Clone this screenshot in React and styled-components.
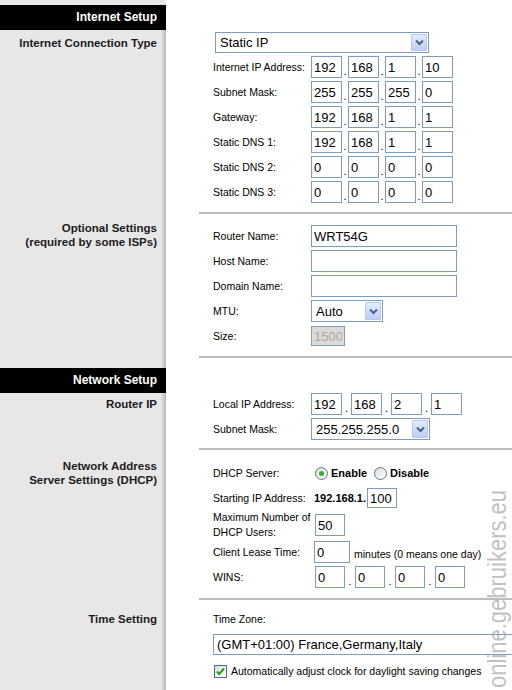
import React from 'react'
import styled, { createGlobalStyle } from 'styled-components'

const GlobalStyle = createGlobalStyle`
  html, body {
    margin: 0;
    padding: 0;
    background: #fff;
  }
  body {
    font-family: "Liberation Sans", Arial, sans-serif;
  }
`

const Page = styled.div`
  position: relative;
  width: 512px;
  height: 690px;
  overflow: hidden;
  background: #fff;
  color: #000;
`

const Section = styled.div`
  display: grid;
  grid-template-columns: 166px 1fr;
`

const Side = styled.div`
  background: linear-gradient(
    to right,
    #e7e7e7 0,
    #e7e7e7 161px,
    #d2d2d2 163px,
    #bababa 166px
  );
  padding: ${props => props.$top || 0}px 9px 0 0;
  text-align: right;
  font-size: 11.5px;
  font-weight: bold;
  line-height: 14px;
  color: #1c1c1c;
`

const HeaderSide = styled.div`
  background: #e7e7e7;
  padding-top: ${props => props.$top || 0}px;
`

const HeaderBar = styled.div`
  background: #000;
  color: #fff;
  height: 25px;
  line-height: 25px;
  padding-right: 9px;
  text-align: right;
  font-size: 12px;
  font-weight: bold;
`

const Main = styled.div`
  display: flex;
  flex-direction: column;
  padding: ${props => props.$top || 0}px 0 0 47px;
  font-size: 10.5px;
`

const Separator = styled.div`
  height: 2px;
  margin: ${props => props.$top || 0}px 0 ${props => props.$bottom || 0}px -14px;
  background: #bcbcbc;
`

const FieldRow = styled.div`
  display: flex;
  align-items: center;
  height: ${props => props.$height || 22}px;
  margin-top: ${props => props.$top || 0}px;
  white-space: nowrap;
`

const Label = styled.div`
  width: ${props => props.$width || 98}px;
  flex: none;
  line-height: 15px;
`

const TextBox = styled.input`
  box-sizing: border-box;
  width: ${props => props.$width || 31}px;
  height: ${props => props.$height || 22}px;
  margin: 0 0 0 ${props => props.$left || 0}px;
  padding: 0 2px;
  border: 1px solid #7f9db9;
  background: ${props => (props.disabled ? '#dcdad5' : '#fff')};
  color: ${props => (props.disabled ? '#a8a8a8' : '#000')};
  font-family: "Liberation Sans", Arial, sans-serif;
  font-size: 13px;
  outline: none;
`

const IpGroup = styled.div`
  display: flex;
  align-items: center;
`

const Dot = styled.span`
  width: ${props => props.$gap}px;
  height: 22px;
  display: flex;
  align-items: flex-end;
  justify-content: center;
  font-size: 11px;
  line-height: 14px;
`

const SelectBox = styled.div`
  box-sizing: border-box;
  display: flex;
  align-items: center;
  width: ${props => props.$width}px;
  height: ${props => props.$height || 22}px;
  margin-left: ${props => props.$left || 0}px;
  padding-left: ${props => props.$pad || 4}px;
  border: 1px solid #7f9db9;
  background: #fff;
  font-size: 13px;
  flex: none;
`

const SelectText = styled.span`
  flex: 1;
`

const ArrowButton = styled.span`
  box-sizing: border-box;
  width: 16px;
  height: calc(100% - 2px);
  margin-right: 1px;
  display: flex;
  align-items: center;
  justify-content: center;
  border: 1px solid #b5c8f3;
  border-radius: 1px;
  background: linear-gradient(#e3ebfd, #bccff8);
`

const BoldText = styled.span`
  font-weight: bold;
  font-size: 11px;
`

const Note = styled.span`
  margin-left: 4px;
  padding-top: 4px;
  font-size: 10.5px;
`

const RadioCircle = styled.span`
  box-sizing: border-box;
  width: 13px;
  height: 13px;
  border-radius: 50%;
  border: 1px solid #5f7795;
  background: linear-gradient(135deg, #dcdcd6, #ffffff);
  display: flex;
  align-items: center;
  justify-content: center;
  margin: 0 3px 0 ${props => props.$left || 0}px;
  &::after {
    content: '';
    width: 5px;
    height: 5px;
    border-radius: 50%;
    background: ${props => (props.$checked ? '#34b034' : 'transparent')};
  }
`

const CheckBox = styled.span`
  box-sizing: border-box;
  width: 13px;
  height: 13px;
  margin: 0 4px 0 1px;
  border: 1px solid #4c6a8e;
  background: linear-gradient(135deg, #dcdcd6, #ffffff);
  display: flex;
  align-items: center;
  justify-content: center;
`

const Watermark = styled.div`
  position: absolute;
  left: 398px;
  top: 578px;
  width: 200px;
  line-height: 22px;
  text-align: center;
  font-size: 22px;
  color: rgba(140, 140, 140, 0.55);
  transform: rotate(-90deg) scaleY(1.2);
  pointer-events: none;
  white-space: nowrap;
`

const Chevron = () => (
  <svg width="9" height="7" viewBox="0 0 9 7">
    <path d="M1 1.5 L4.5 5 L8 1.5" fill="none" stroke="#4d6185" strokeWidth="2" />
  </svg>
)

const Check = () => (
  <svg width="11" height="11" viewBox="0 0 11 11">
    <path d="M2 5.5 L4.3 8 L9 2.5" fill="none" stroke="#21a121" strokeWidth="2" />
  </svg>
)

const Select = ({ children, width, height, left, pad, arrow = true }) => (
  <SelectBox $width={width} $height={height} $left={left} $pad={pad}>
    <SelectText>{children}</SelectText>
    {arrow && (
      <ArrowButton>
        <Chevron />
      </ArrowButton>
    )}
  </SelectBox>
)

const IpFields = ({ values, gap, width = 31 }) => (
  <IpGroup>
    {values.map((value, index) => (
      <React.Fragment key={index}>
        {index > 0 && <Dot $gap={gap}>.</Dot>}
        <TextBox $width={width} defaultValue={value} readOnly />
      </React.Fragment>
    ))}
  </IpGroup>
)

const internetRows = [
  ['Internet IP Address:', ['192', '168', '1', '10']],
  ['Subnet Mask:', ['255', '255', '255', '0']],
  ['Gateway:', ['192', '168', '1', '1']],
  ['Static DNS 1:', ['192', '168', '1', '1']],
  ['Static DNS 2:', ['0', '0', '0', '0']],
  ['Static DNS 3:', ['0', '0', '0', '0']]
]

export default function App() {
  return (
    <Page>
      <GlobalStyle />

      <Section>
        <HeaderSide $top={5}>
          <HeaderBar>Internet Setup</HeaderBar>
        </HeaderSide>
        <div />
      </Section>

      <Section>
        <Side $top={6}>Internet Connection Type</Side>
        <Main $top={2}>
          <FieldRow $height={21}>
            <Select width={214} height={21} left={2}>Static IP</Select>
          </FieldRow>
          {internetRows.map(([label, values]) => (
            <FieldRow key={label} $top={3}>
              <Label>{label}</Label>
              <IpFields values={values} gap={6} />
            </FieldRow>
          ))}
          <Separator $top={9} />
        </Main>
      </Section>

      <Section>
        <Side $top={7}>
          Optional Settings
          <br />
          (required by some ISPs)
        </Side>
        <Main $top={11}>
          <FieldRow>
            <Label>Router Name:</Label>
            <TextBox $width={146} defaultValue="WRT54G" readOnly />
          </FieldRow>
          <FieldRow $top={3}>
            <Label>Host Name:</Label>
            <TextBox $width={146} defaultValue="" readOnly />
          </FieldRow>
          <FieldRow $top={3}>
            <Label>Domain Name:</Label>
            <TextBox $width={146} defaultValue="" readOnly />
          </FieldRow>
          <FieldRow $top={3}>
            <Label>MTU:</Label>
            <Select width={72}>Auto</Select>
          </FieldRow>
          <FieldRow $top={3}>
            <Label>Size:</Label>
            <TextBox $width={34} $height={20} defaultValue="1500" disabled />
          </FieldRow>
          <Separator $top={9} $bottom={10} />
        </Main>
      </Section>

      <Section>
        <HeaderSide>
          <HeaderBar>Network Setup</HeaderBar>
        </HeaderSide>
        <div />
      </Section>

      <Section>
        <Side $top={4}>Router IP</Side>
        <Main>
          <FieldRow>
            <Label>Local IP Address:</Label>
            <IpFields values={['192', '168', '2', '1']} gap={9} />
          </FieldRow>
          <FieldRow $top={3}>
            <Label>Subnet Mask:</Label>
            <Select width={119}>255.255.255.0</Select>
          </FieldRow>
          <Separator $top={8} />
        </Main>
      </Section>

      <Section>
        <Side $top={9}>
          Network Address
          <br />
          Server Settings (DHCP)
        </Side>
        <Main>
          <FieldRow $top={12}>
            <Label $width={102}>DHCP Server:</Label>
            <RadioCircle $checked />
            <BoldText>Enable</BoldText>
            <RadioCircle $left={7} />
            <BoldText>Disable</BoldText>
          </FieldRow>
          <FieldRow $top={3}>
            <Label $width={101}>Starting IP Address:</Label>
            <BoldText>192.168.1.</BoldText>
            <TextBox $width={30} $height={20} $left={1} defaultValue="100" readOnly />
          </FieldRow>
          <FieldRow $top={5}>
            <Label $width={102}>
              Maximum Number of
              <br />
              DHCP Users:
            </Label>
            <TextBox $width={30} defaultValue="50" readOnly />
          </FieldRow>
          <FieldRow $top={5}>
            <Label $width={101}>Client Lease Time:</Label>
            <TextBox $width={36} defaultValue="0" readOnly />
            <Note>minutes (0 means one day)</Note>
          </FieldRow>
          <FieldRow $top={3}>
            <Label $width={102}>WINS:</Label>
            <IpFields values={['0', '0', '0', '0']} gap={10} width={30} />
          </FieldRow>
          <Separator $top={10} />
        </Main>
      </Section>

      <Section>
        <Side $top={12}>Time Setting</Side>
        <Main>
          <FieldRow $top={11} $height={16}>
            <Label>Time Zone:</Label>
          </FieldRow>
          <FieldRow $top={7} $height={21}>
            <Select width={330} height={21} pad={3} arrow={false}>
              (GMT+01:00) France,Germany,Italy
            </Select>
          </FieldRow>
          <FieldRow $top={6} $height={20}>
            <CheckBox>
              <Check />
            </CheckBox>
            <span>Automatically adjust clock for daylight saving changes</span>
          </FieldRow>
        </Main>
        <Side style={{ minHeight: 120 }} />
      </Section>

      <Watermark>online.gebruikers.eu</Watermark>
    </Page>
  )
}
